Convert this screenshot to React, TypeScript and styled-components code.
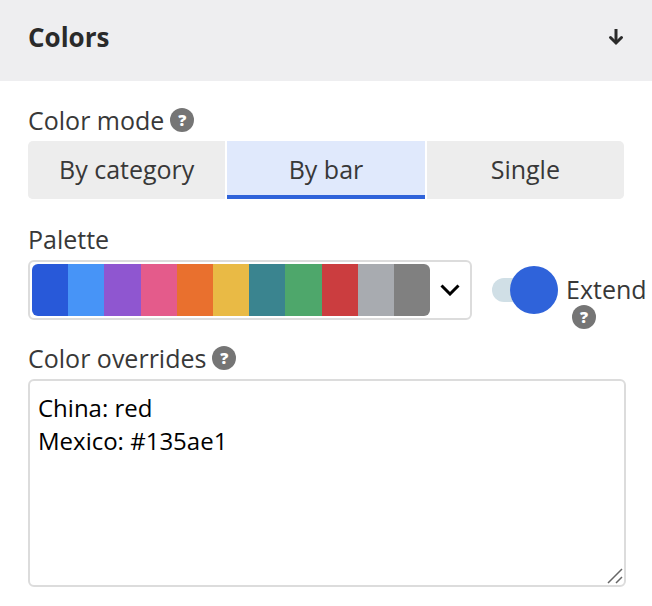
import React, { useState } from "react";
import styled, { createGlobalStyle } from "styled-components";

const GlobalStyle = createGlobalStyle`
  *, *::before, *::after { box-sizing: border-box; }
  body {
    margin: 0;
    background: #fff;
    color: #383838;
    font: 400 25px/32px "Open Sans", "Noto Sans", sans-serif;
  }
  button, select, textarea { font: inherit; }
`;

const Header = styled.header`
  display: flex;
  align-items: center;
  justify-content: space-between;
  padding: 21px 28px 28px;
  background: #eeeef0;
  color: #2a2a2a;
`;

const Title = styled.h2`
  margin: 0;
  font-size: 26px;
  line-height: 32px;
  font-weight: 700;
`;

const CollapseButton = styled.button`
  display: flex;
  padding: 0;
  border: 0;
  background: none;
  color: inherit;
`;

const Body = styled.main`
  display: flex;
  flex-direction: column;
  gap: 24px;
  padding: 23px 28px 16px;
`;

const Field = styled.div`
  display: flex;
  flex-direction: column;
  gap: 5px;
`;

const LabelRow = styled.div`
  display: flex;
  align-items: center;
  gap: 6px;
`;

const HelpButton = styled.button`
  display: inline-flex;
  align-items: center;
  justify-content: center;
  flex: none;
  width: 24px;
  height: 24px;
  padding: 0;
  border: 0;
  border-radius: 50%;
  background: #757575;
  color: #fff;
  font-size: 16px;
  line-height: 24px;
  font-weight: 800;
`;

const Segments = styled.div`
  display: grid;
  grid-template-columns: repeat(3, 1fr);
  gap: 2px;
  overflow: hidden;
  border-radius: 5px;
`;

const Segment = styled.button<{ $active: boolean }>`
  height: 58px;
  padding: 2px 0 0;
  border: 0;
  border-bottom: 4px solid ${(p) => (p.$active ? "#2f63da" : "#ededed")};
  background: ${(p) => (p.$active ? "#e0e9fc" : "#ededed")};
  color: #383838;
`;

const PaletteRow = styled.div`
  display: grid;
  grid-template-columns: minmax(0, 1fr) 132px;
  column-gap: 20px;
  align-items: start;
  margin-bottom: -11px;
`;

const PaletteBox = styled.div`
  display: grid;
  grid-template-columns: minmax(0, 1fr) 40px;
  align-items: center;
  justify-items: center;
  height: 60px;
  padding: 2px 0 2px 2px;
  border: 2px solid #dcdcdc;
  border-radius: 6px;
  background: #fff;
`;

const Swatches = styled.div`
  grid-area: 1 / 1;
  display: flex;
  width: 100%;
  height: 52px;
  overflow: hidden;
  border-radius: 6px;
`;

const Swatch = styled.span<{ $color: string }>`
  flex: 1;
  background: ${(p) => p.$color};
`;

const Chevron = styled.svg`
  grid-area: 1 / 2;
`;

const PaletteSelect = styled.select`
  grid-area: 1 / 1 / 2 / 3;
  width: 100%;
  height: 52px;
  opacity: 0;
  cursor: pointer;
`;

const ExtendGroup = styled.div`
  display: flex;
  align-items: flex-start;
  gap: 8px;
  margin: 6px -24px 0 0;
`;

const Switch = styled.input`
  appearance: none;
  display: grid;
  align-items: center;
  flex: none;
  width: 66px;
  height: 48px;
  margin: 0;
  cursor: pointer;

  &::before,
  &::after {
    content: "";
    grid-area: 1 / 1;
  }
  &::before {
    height: 24px;
    border-radius: 12px;
    background: #d0dfe6;
  }
  &::after {
    width: 48px;
    height: 48px;
    border-radius: 50%;
    background: #8795a0;
  }
  &:checked::after {
    justify-self: end;
    background: #2f63da;
  }
`;

const ExtendText = styled.div`
  display: flex;
  flex-direction: column;
  align-items: flex-start;
  padding-top: 7px;

  ${HelpButton} {
    margin-left: 6px;
  }
`;

const TextBox = styled.div`
  display: grid;
  margin-right: -2px;
`;

const Overrides = styled.textarea`
  grid-area: 1 / 1;
  width: 100%;
  height: 208px;
  padding: 10px 8px;
  border: 2px solid #dcdcdc;
  border-radius: 6px;
  background: #fff;
  color: #000;
  font-size: 24px;
  line-height: 33px;
  resize: vertical;

  &::-webkit-resizer {
    background: transparent;
  }
`;

const Grip = styled.svg`
  grid-area: 1 / 1;
  place-self: end;
  margin: 0 3px 3px 0;
  pointer-events: none;
`;

const palette = [
  "#2859d9", "#4794f7", "#8f56d0", "#e45b8b", "#e9702e", "#e9ba45",
  "#3a848f", "#4ea76b", "#cb3d3f", "#a8abb0", "#808080",
];

const modes = ["By category", "By bar", "Single"];

function Help({ topic }: { topic: string }) {
  return <HelpButton type="button" aria-label={`Help: ${topic}`}>?</HelpButton>;
}

export default function App() {
  const [mode, setMode] = useState("By bar");
  const [extend, setExtend] = useState(true);
  const [overrides, setOverrides] = useState("China: red\nMexico: #135ae1");

  return (
    <>
      <GlobalStyle />
      <Header>
        <Title>Colors</Title>
        <CollapseButton type="button" aria-label="Collapse colors">
          <svg width="16" height="18" viewBox="0 0 16 18" fill="none" stroke="currentColor" strokeWidth="3">
            <path d="M8 1v14" />
            <path d="M2.5 9.5 8 15l5.5-5.5" strokeLinecap="round" />
          </svg>
        </CollapseButton>
      </Header>
      <Body>
        <Field>
          <LabelRow>
            <span id="mode-label">Color mode</span>
            <Help topic="color mode" />
          </LabelRow>
          <Segments role="group" aria-labelledby="mode-label">
            {modes.map((name) => (
              <Segment
                key={name}
                type="button"
                $active={name === mode}
                aria-pressed={name === mode}
                onClick={() => setMode(name)}
              >
                {name}
              </Segment>
            ))}
          </Segments>
        </Field>
        <Field>
          <LabelRow>
            <label htmlFor="palette">Palette</label>
          </LabelRow>
          <PaletteRow>
            <PaletteBox>
              <Swatches>
                {palette.map((color) => (
                  <Swatch key={color} $color={color} />
                ))}
              </Swatches>
              <Chevron width="20" height="12" viewBox="0 0 20 12" fill="none" stroke="#000" strokeWidth="3">
                <path d="M1.5 1.5 10 10l8.5-8.5" />
              </Chevron>
              <PaletteSelect id="palette" defaultValue="default">
                <option value="default" aria-label="Default palette" />
              </PaletteSelect>
            </PaletteBox>
            <ExtendGroup>
              <Switch
                id="extend"
                type="checkbox"
                role="switch"
                checked={extend}
                onChange={(e) => setExtend(e.target.checked)}
              />
              <ExtendText>
                <label htmlFor="extend">Extend</label>
                <Help topic="extend" />
              </ExtendText>
            </ExtendGroup>
          </PaletteRow>
        </Field>
        <Field>
          <LabelRow>
            <label htmlFor="overrides">Color overrides</label>
            <Help topic="color overrides" />
          </LabelRow>
          <TextBox>
            <Overrides
              id="overrides"
              spellCheck={false}
              value={overrides}
              onChange={(e) => setOverrides(e.target.value)}
            />
            <Grip width="16" height="16" viewBox="0 0 16 16" stroke="#666" strokeWidth="1.5">
              <path d="M1 15 15 1M9 15l6-6" />
            </Grip>
          </TextBox>
        </Field>
      </Body>
    </>
  );
}
